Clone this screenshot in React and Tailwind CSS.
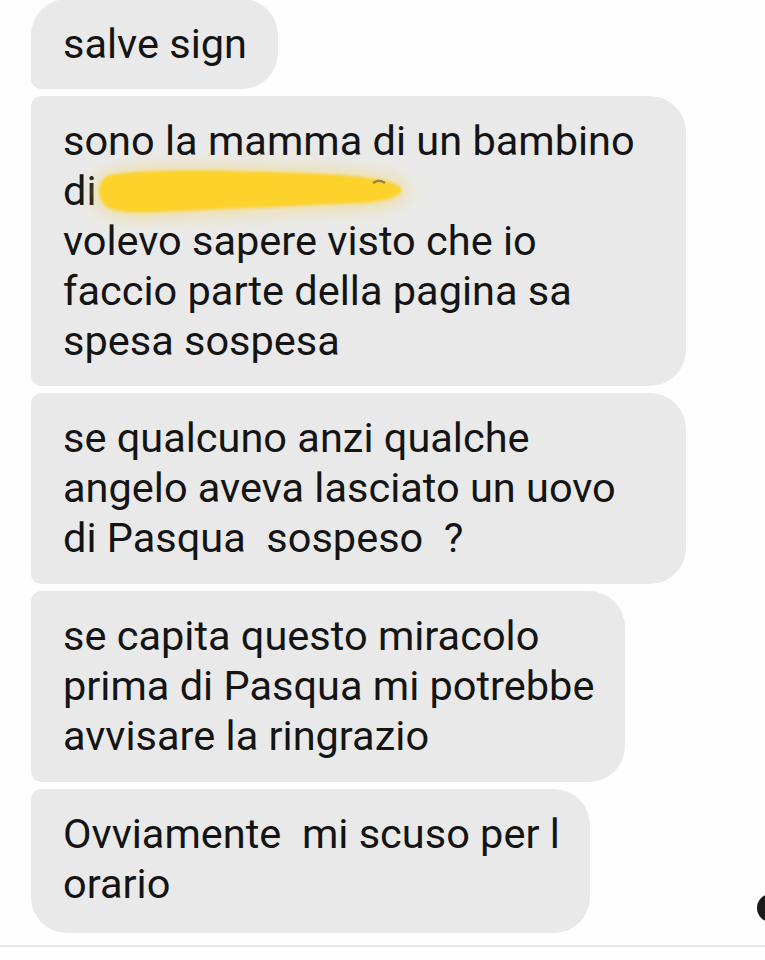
import React from "react";

const font = { fontFamily: "Roboto, 'Noto Sans', sans-serif" };

function Bubble({ lines, className = "", children }) {
  return (
    <div
      className={`bg-[#e9e9e9] pl-8 pr-8 pt-5 text-[41.5px] leading-[50px] text-[#141414] ${className}`}
    >
      {children ||
        lines.map((l, i) => (
          <div key={i} className="whitespace-pre">
            {l}
          </div>
        ))}
    </div>
  );
}

function Scribble() {
  return (
    <svg
      width="380"
      height="80"
      viewBox="0 0 380 80"
      className="absolute left-[10px] top-[-14px] pointer-events-none"
    >
      <defs>
        <filter id="glow" x="-20%" y="-60%" width="140%" height="220%">
          <feGaussianBlur stdDeviation="10" />
        </filter>
        <filter id="soft" x="-5%" y="-20%" width="110%" height="140%">
          <feGaussianBlur stdDeviation="1.4" />
        </filter>
      </defs>
      <path
        d="M32 24 C60 14 160 16 250 20 C290 22 328 26 334 36 C338 46 318 52 290 54 C240 56 170 60 110 62 C70 64 40 64 30 56 C18 46 18 32 32 24 Z"
        fill="#f6d14f"
        opacity="0.55"
        filter="url(#glow)"
      />
      <path
        d="M34 24 C60 16 160 18 250 22 C288 24 322 28 328 36 C332 44 314 49 288 51 C240 53 170 56 110 59 C72 61 44 62 34 55 C24 47 23 31 34 24 Z"
        fill="#fdd22a"
        filter="url(#soft)"
      />
      <path d="M300 31 C304 28 308 28 312 31" stroke="#444" strokeWidth="2.5" fill="none" opacity="0.55" />
    </svg>
  );
}

export default function App() {
  return (
    <div className="relative w-[765px] h-[960px] bg-[#fefefe] overflow-hidden" style={font}>
      <div className="flex flex-col items-start gap-[7px] pl-[31px] pt-0 mt-[-1px]">
        <Bubble
          lines={["salve sign"]}
          className="w-[247px] pb-5 rounded-tl-[36px] rounded-tr-[36px] rounded-br-[36px] rounded-bl-[10px]"
        />
        <Bubble className="w-[655px] pb-5 rounded-tl-[10px] rounded-bl-[10px] rounded-tr-[36px] rounded-br-[36px]">
          <div className="whitespace-pre">sono la mamma di un bambino</div>
          <div className="relative whitespace-pre">
            di
            <Scribble />
          </div>
          <div className="whitespace-pre">volevo sapere visto che io</div>
          <div className="whitespace-pre">faccio parte della pagina sa</div>
          <div className="whitespace-pre">spesa sospesa</div>
        </Bubble>
        <Bubble
          lines={["se qualcuno anzi qualche", "angelo aveva lasciato un uovo", "di Pasqua  sospeso  ?"]}
          className="w-[655px] pb-[21px] rounded-tl-[10px] rounded-bl-[10px] rounded-tr-[36px] rounded-br-[36px]"
        />
        <Bubble
          lines={["se capita questo miracolo", "prima di Pasqua mi potrebbe", "avvisare la ringrazio"]}
          className="w-[594px] pb-[21px] rounded-tl-[10px] rounded-bl-[10px] rounded-tr-[36px] rounded-br-[36px]"
        />
        <Bubble
          lines={["Ovviamente  mi scuso per l", "orario"]}
          className="w-[559px] pb-6 rounded-tl-[10px] rounded-bl-[36px] rounded-tr-[36px] rounded-br-[36px]"
        />
      </div>
      <div className="absolute left-[757px] top-[894px] w-[28px] h-[28px] rounded-full bg-[#1a1a1a]" />
      <div className="absolute left-0 top-[945px] w-full h-[2px] bg-[#e6e6e6]" />
    </div>
  );
}
